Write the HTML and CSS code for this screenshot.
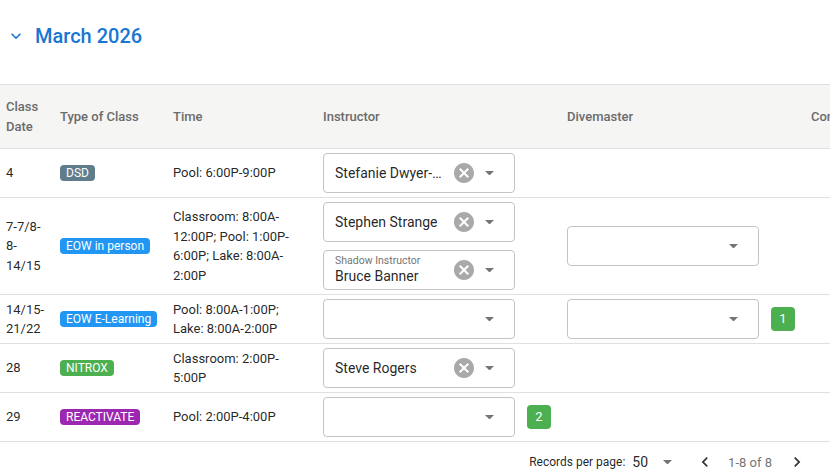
FILE: index.html
```html
<!DOCTYPE html>
<html lang="en">
<head>
<meta charset="utf-8">
<title>March 2026</title>
<link rel="stylesheet" href="styles.css">
</head>
<body>
<div class="title">
  <svg class="chev" viewBox="0 0 24 24"><path d="M7.41,8.58L12,13.17L16.59,8.58L18,10L12,16L6,10L7.41,8.58Z"/></svg>
  <h1>March 2026</h1>
</div>

<div class="table">
  <div class="row head">
    <div class="cell c1">Class Date</div>
    <div class="cell c2">Type of Class</div>
    <div class="cell c3">Time</div>
    <div class="cell c4">Instructor</div>
    <div class="cell c5">Divemaster</div>
    <div class="cell c6">Comments</div>
  </div>

  <div class="row">
    <div class="cell c1">4</div>
    <div class="cell c2"><span class="chip grey">DSD</span></div>
    <div class="cell c3">Pool: 6:00P-9:00P</div>
    <div class="cell c4">
      <div class="select">
        <span class="value">Stefanie Dwyer-Hughes</span>
        <svg class="clear" viewBox="0 0 24 24"><path d="M12,2C17.53,2 22,6.47 22,12C22,17.53 17.53,22 12,22C6.47,22 2,17.530 2,12C2,6.47 6.47,2 12,2M15.59,7L12,10.59L8.41,7L7,8.41L10.59,12L7,15.59L8.41,17L12,13.41L15.59,17L17,15.59L13.41,12L17,8.41L15.59,7Z"/></svg>
        <span class="caret"><svg viewBox="0 0 10 5"><path d="M0 0L5 5L10 0Z"/></svg></span>
      </div>
    </div>
    <div class="cell c5"></div>
    <div class="cell c6"></div>
  </div>

  <div class="row">
    <div class="cell c1">7-7/8-8-14/15</div>
    <div class="cell c2"><span class="chip blue">EOW in person</span></div>
    <div class="cell c3">Classroom: 8:00A-12:00P; Pool: 1:00P-6:00P; Lake: 8:00A-2:00P</div>
    <div class="cell c4 stack">
      <div class="select">
        <span class="value">Stephen Strange</span>
        <svg class="clear" viewBox="0 0 24 24"><path d="M12,2C17.53,2 22,6.47 22,12C22,17.53 17.53,22 12,22C6.47,22 2,17.53 2,12C2,6.47 6.47,2 12,2M15.59,7L12,10.59L8.41,7L7,8.41L10.59,12L7,15.59L8.41,17L12,13.41L15.59,17L17,15.59L13.41,12L17,8.41L15.59,7Z"/></svg>
        <span class="caret"><svg viewBox="0 0 10 5"><path d="M0 0L5 5L10 0Z"/></svg></span>
      </div>
      <div class="select">
        <span class="field">
          <span class="label">Shadow Instructor</span>
          <span class="value">Bruce Banner</span>
        </span>
        <svg class="clear" viewBox="0 0 24 24"><path d="M12,2C17.53,2 22,6.47 22,12C22,17.53 17.53,22 12,22C6.47,22 2,17.53 2,12C2,6.47 6.47,2 12,2M15.59,7L12,10.59L8.41,7L7,8.41L10.59,12L7,15.59L8.41,17L12,13.41L15.59,17L17,15.59L13.41,12L17,8.41L15.59,7Z"/></svg>
        <span class="caret"><svg viewBox="0 0 10 5"><path d="M0 0L5 5L10 0Z"/></svg></span>
      </div>
    </div>
    <div class="cell c5">
      <div class="select">
        <span class="value"></span>
        <span class="caret"><svg viewBox="0 0 10 5"><path d="M0 0L5 5L10 0Z"/></svg></span>
      </div>
    </div>
    <div class="cell c6"></div>
  </div>

  <div class="row">
    <div class="cell c1">14/15-21/22</div>
    <div class="cell c2"><span class="chip blue">EOW E-Learning</span></div>
    <div class="cell c3">Pool: 8:00A-1:00P; Lake: 8:00A-2:00P</div>
    <div class="cell c4">
      <div class="select">
        <span class="value"></span>
        <span class="caret"><svg viewBox="0 0 10 5"><path d="M0 0L5 5L10 0Z"/></svg></span>
      </div>
    </div>
    <div class="cell c5">
      <div class="select">
        <span class="value"></span>
        <span class="caret"><svg viewBox="0 0 10 5"><path d="M0 0L5 5L10 0Z"/></svg></span>
      </div>
      <span class="badge">1</span>
    </div>
    <div class="cell c6"></div>
  </div>

  <div class="row">
    <div class="cell c1">28</div>
    <div class="cell c2"><span class="chip green">NITROX</span></div>
    <div class="cell c3">Classroom: 2:00P-5:00P</div>
    <div class="cell c4">
      <div class="select">
        <span class="value">Steve Rogers</span>
        <svg class="clear" viewBox="0 0 24 24"><path d="M12,2C17.53,2 22,6.47 22,12C22,17.53 17.53,22 12,22C6.47,22 2,17.53 2,12C2,6.47 6.47,2 12,2M15.59,7L12,10.59L8.41,7L7,8.41L10.59,12L7,15.59L8.41,17L12,13.41L15.59,17L17,15.59L13.41,12L17,8.41L15.59,7Z"/></svg>
        <span class="caret"><svg viewBox="0 0 10 5"><path d="M0 0L5 5L10 0Z"/></svg></span>
      </div>
    </div>
    <div class="cell c5"></div>
    <div class="cell c6"></div>
  </div>

  <div class="row">
    <div class="cell c1">29</div>
    <div class="cell c2"><span class="chip purple">REACTIVATE</span></div>
    <div class="cell c3">Pool: 2:00P-4:00P</div>
    <div class="cell c4">
      <div class="select">
        <span class="value"></span>
        <span class="caret"><svg viewBox="0 0 10 5"><path d="M0 0L5 5L10 0Z"/></svg></span>
      </div>
      <span class="badge">2</span>
    </div>
    <div class="cell c5"></div>
    <div class="cell c6"></div>
  </div>
</div>

<div class="footer">
  <span class="rpp">Records per page:</span>
  <span class="per">50</span>
  <span class="fcaret"><svg viewBox="0 0 10 5"><path d="M0 0L5 5L10 0Z"/></svg></span>
  <svg class="nav prev" viewBox="0 0 24 24"><path d="M15.41,16.58L10.83,12L15.41,7.41L14,6L8,12L14,18L15.41,16.58Z"/></svg>
  <span class="range">1-8 of 8</span>
  <svg class="nav next" viewBox="0 0 24 24"><path d="M8.59,16.58L13.17,12L8.59,7.41L10,6L16,12L10,18L8.59,16.58Z"/></svg>
</div>
</body>
</html>
```

FILE: styles.css
```css
* {
  box-sizing: border-box;
}

body {
  margin: 0;
  font-family: Roboto, "Noto Sans", "Liberation Sans", sans-serif;
  color: rgba(0, 0, 0, 0.87);
  background: #fff;
  overflow: hidden;
}

.title {
  display: flex;
  align-items: center;
  gap: 9px;
  height: 72px;
  padding-left: 6px;
  margin-bottom: 12px;
}

.chev {
  width: 20px;
  height: 20px;
  fill: #1976d2;
}

h1 {
  margin: 0;
  font-size: 20px;
  font-weight: 500;
  line-height: 24px;
  color: #1976d2;
}

.table {
  overflow: hidden;
  border-top: 1px solid #e0e0e0;
}

.row {
  display: grid;
  grid-template-columns: 54px 113px 150px 244px 244px 240px;
  width: max-content;
  min-height: 49px;
  border-bottom: 1px solid #e0e0e0;
  font-size: 13px;
  line-height: 19.5px;
}

.head {
  height: 64px;
  background: #f5f5f4;
  font-weight: 500;
  color: #6b6b6b;
}

.cell {
  display: flex;
  align-items: center;
  gap: 12px;
  padding: 0 6px;
}

.c3 {
  padding-right: 16px;
}

.stack {
  flex-direction: column;
  align-items: flex-start;
  justify-content: center;
  gap: 8px;
  padding-top: 4px;
  padding-bottom: 4px;
}

.chip {
  display: inline-block;
  padding: 0 6px;
  border-radius: 4px;
  font-size: 12px;
  line-height: 16px;
  color: #fff;
  white-space: nowrap;
}

.grey { background: #607d8b; }
.blue { background: #2196f3; }
.green { background: #4caf50; }
.purple { background: #9c27b0; }

.select {
  display: flex;
  align-items: center;
  flex-shrink: 0;
  width: 192px;
  height: 40px;
  padding: 0 13px 0 11px;
  border: 1px solid #c4c4c4;
  border-radius: 4px;
  background: #fff;
}

.select .value {
  flex: 1;
  min-width: 0;
  margin-right: 5px;
  font-size: 14px;
  line-height: 18px;
  white-space: nowrap;
  overflow: hidden;
  text-overflow: ellipsis;
}

.field {
  display: flex;
  flex-direction: column;
  flex: 1;
  min-width: 0;
}

.field .value {
  flex: none;
  margin-right: 0;
}

.label {
  font-size: 10.5px;
  line-height: 12px;
  color: #757575;
  white-space: nowrap;
}

.clear {
  width: 24px;
  height: 24px;
  margin-right: 1px;
  fill: #a9a9a9;
  flex-shrink: 0;
}

.caret {
  display: flex;
  align-items: center;
  justify-content: center;
  width: 24px;
  height: 24px;
  flex-shrink: 0;
}

.caret svg,
.fcaret svg {
  width: 9px;
  height: 4.5px;
  fill: #757575;
}

.badge {
  display: flex;
  align-items: center;
  justify-content: center;
  width: 24px;
  height: 24px;
  border-radius: 4px;
  background: #4caf50;
  color: #fff;
  font-size: 13px;
  flex-shrink: 0;
}

.footer {
  display: flex;
  align-items: center;
  justify-content: flex-end;
  height: 40px;
  padding-right: 23px;
  font-size: 12px;
}

.rpp {
  margin-right: 7px;
}

.per {
  font-size: 14px;
  margin-right: 9px;
}

.fcaret {
  display: flex;
  align-items: center;
  justify-content: center;
  width: 20px;
  height: 20px;
  margin-right: 18px;
}

.nav {
  width: 20px;
  height: 20px;
  fill: #333;
}

.range {
  font-size: 13px;
  color: #757575;
  margin: 0 15px 0 13px;
}
```
